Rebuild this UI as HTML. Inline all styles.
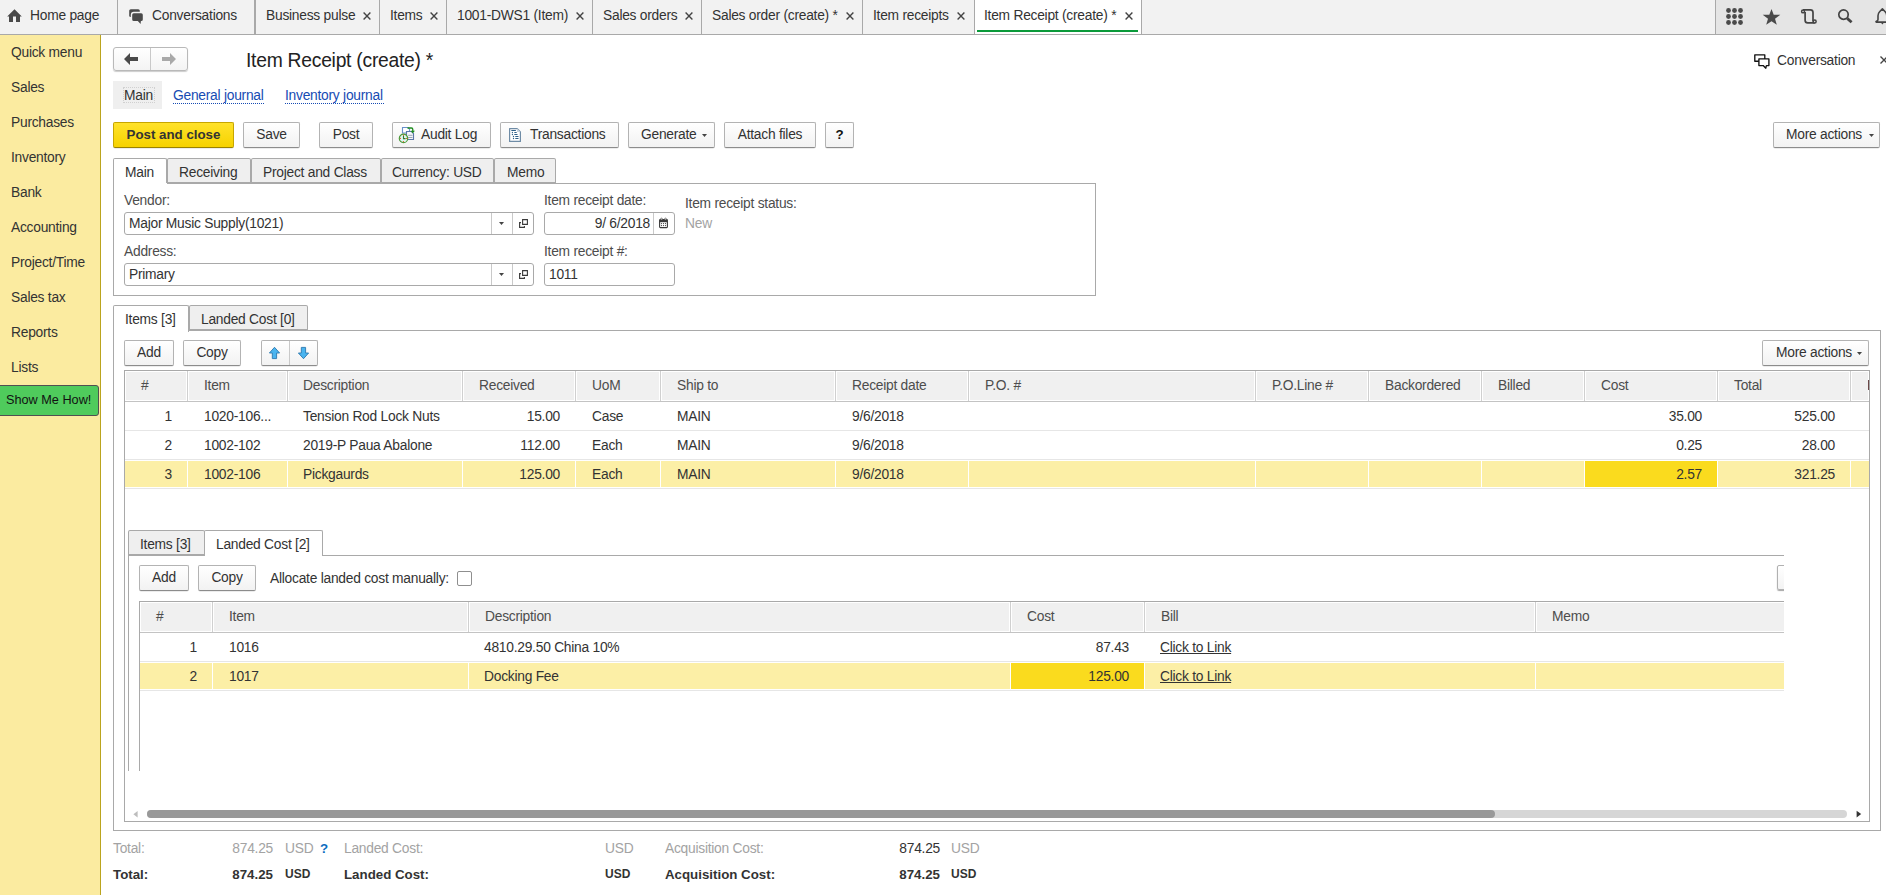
<!DOCTYPE html><html><head><meta charset="utf-8"><style>
*{margin:0;padding:0;box-sizing:border-box}
html,body{width:1886px;height:895px;overflow:hidden;background:#fff;font-family:"Liberation Sans",sans-serif;}
.t{position:absolute;white-space:nowrap;}
.r{position:absolute;}
.btn{position:absolute;border:1px solid #b3b3b3;border-bottom-color:#8c8c8c;border-radius:2px;background:linear-gradient(#fff,#f2f2f2);box-shadow:0 0.5px 0.5px rgba(0,0,0,.15);}
.btn.y{background:linear-gradient(#ffe22a,#f6d200);border-color:#c7a600;border-bottom-color:#9a8200;}
svg{position:absolute;overflow:visible}
</style></head><body>
<div class="r" style="left:0px;top:0px;width:1886px;height:34px;background:#f2f2f2"></div>
<div class="r" style="left:0px;top:34px;width:1886px;height:1px;background:#a9a9a9"></div>
<div class="r" style="left:1716px;top:0px;width:170px;height:34px;background:#e5e5e5"></div>
<div class="r" style="left:117px;top:0px;width:1px;height:34px;background:#a9a9a9"></div>
<div class="r" style="left:254px;top:0px;width:2px;height:34px;background:#a9a9a9"></div>
<div class="r" style="left:379px;top:0px;width:1px;height:34px;background:#a9a9a9"></div>
<div class="r" style="left:446px;top:0px;width:1px;height:34px;background:#a9a9a9"></div>
<div class="r" style="left:592px;top:0px;width:1px;height:34px;background:#a9a9a9"></div>
<div class="r" style="left:701px;top:0px;width:1px;height:34px;background:#a9a9a9"></div>
<div class="r" style="left:862px;top:0px;width:1px;height:34px;background:#a9a9a9"></div>
<div class="r" style="left:974px;top:0px;width:1px;height:34px;background:#a9a9a9"></div>
<div class="r" style="left:1141px;top:0px;width:1px;height:34px;background:#a9a9a9"></div>
<div class="r" style="left:1715px;top:0px;width:1px;height:34px;background:#a9a9a9"></div>
<div class="r" style="left:975px;top:0px;width:166px;height:34px;background:#fff"></div>
<div class="r" style="left:977px;top:30px;width:161px;height:2px;background:#0a9a3a"></div>
<div class="t" style="left:30px;top:8.72px;font-size:13.8px;line-height:13.8px;color:#333;font-weight:normal;letter-spacing:-0.25px;">Home page</div>
<div class="t" style="left:152px;top:8.72px;font-size:13.8px;line-height:13.8px;color:#333;font-weight:normal;letter-spacing:-0.25px;">Conversations</div>
<div class="t" style="left:266px;top:8.72px;font-size:13.8px;line-height:13.8px;color:#333;font-weight:normal;letter-spacing:-0.25px;">Business pulse</div>
<svg style="left:363px;top:11.6px" width="8" height="8"><path d="M0.6 0.6L7.4 7.4M7.4 0.6L0.6 7.4" stroke="#444" stroke-width="1.4"/></svg>
<div class="t" style="left:390px;top:8.72px;font-size:13.8px;line-height:13.8px;color:#333;font-weight:normal;letter-spacing:-0.25px;">Items</div>
<svg style="left:430px;top:11.6px" width="8" height="8"><path d="M0.6 0.6L7.4 7.4M7.4 0.6L0.6 7.4" stroke="#444" stroke-width="1.4"/></svg>
<div class="t" style="left:457px;top:8.72px;font-size:13.8px;line-height:13.8px;color:#333;font-weight:normal;letter-spacing:-0.25px;">1001-DWS1 (Item)</div>
<svg style="left:576px;top:11.6px" width="8" height="8"><path d="M0.6 0.6L7.4 7.4M7.4 0.6L0.6 7.4" stroke="#444" stroke-width="1.4"/></svg>
<div class="t" style="left:603px;top:8.72px;font-size:13.8px;line-height:13.8px;color:#333;font-weight:normal;letter-spacing:-0.25px;">Sales orders</div>
<svg style="left:685px;top:11.6px" width="8" height="8"><path d="M0.6 0.6L7.4 7.4M7.4 0.6L0.6 7.4" stroke="#444" stroke-width="1.4"/></svg>
<div class="t" style="left:712px;top:8.72px;font-size:13.8px;line-height:13.8px;color:#333;font-weight:normal;letter-spacing:-0.25px;">Sales order (create) *</div>
<svg style="left:846px;top:11.6px" width="8" height="8"><path d="M0.6 0.6L7.4 7.4M7.4 0.6L0.6 7.4" stroke="#444" stroke-width="1.4"/></svg>
<div class="t" style="left:873px;top:8.72px;font-size:13.8px;line-height:13.8px;color:#333;font-weight:normal;letter-spacing:-0.25px;">Item receipts</div>
<svg style="left:957px;top:11.6px" width="8" height="8"><path d="M0.6 0.6L7.4 7.4M7.4 0.6L0.6 7.4" stroke="#444" stroke-width="1.4"/></svg>
<div class="t" style="left:984px;top:8.72px;font-size:13.8px;line-height:13.8px;color:#333;font-weight:normal;letter-spacing:-0.25px;">Item Receipt (create) *</div>
<svg style="left:1125px;top:11.6px" width="8" height="8"><path d="M0.6 0.6L7.4 7.4M7.4 0.6L0.6 7.4" stroke="#444" stroke-width="1.4"/></svg>
<svg style="left:7px;top:9px" width="15" height="14"><path d="M7.5 0.2L0.2 7.6H2V13H6V7.6H9V13H13V7.6H14.8Z" fill="#4a4a4a"/></svg>
<svg style="left:124px;top:4px" width="26" height="26"><rect x="5.2" y="5.2" width="10.6" height="7.8" rx="1.6" fill="#4a4a4a"/><path d="M9.8 9.2H17.2Q18.8 9.2 18.8 10.8V15.4Q18.8 17 17.2 17H16.9L16.6 20L13.8 17H9.8Q8.2 17 8.2 15.4V10.8Q8.2 9.2 9.8 9.2Z" fill="#4a4a4a" stroke="#f2f2f2" stroke-width="2.8" paint-order="stroke" stroke-linejoin="round"/></svg>
<svg style="left:1726px;top:8px" width="17" height="17"><circle cx="2.5" cy="2.5" r="2.4" fill="#4a4a4a"/><circle cx="2.5" cy="8.5" r="2.4" fill="#4a4a4a"/><circle cx="2.5" cy="14.5" r="2.4" fill="#4a4a4a"/><circle cx="8.5" cy="2.5" r="2.4" fill="#4a4a4a"/><circle cx="8.5" cy="8.5" r="2.4" fill="#4a4a4a"/><circle cx="8.5" cy="14.5" r="2.4" fill="#4a4a4a"/><circle cx="14.5" cy="2.5" r="2.4" fill="#4a4a4a"/><circle cx="14.5" cy="8.5" r="2.4" fill="#4a4a4a"/><circle cx="14.5" cy="14.5" r="2.4" fill="#4a4a4a"/></svg>
<svg style="left:1763px;top:9px" width="17" height="16"><path d="M8.5 0L10.7 5.7L17.3 5.8L12 9.7L13.8 15.8L8.5 12.2L3.2 15.8L5 9.7L-0.3 5.8L6.3 5.7Z" fill="#4a4a4a"/></svg>
<svg style="left:1795px;top:4px" width="26" height="26"><path d="M8 5.9H15.4Q18 5.9 18 8.5V17.5" fill="none" stroke="#444" stroke-width="1.7"/><path d="M10.1 8V16.3Q10.1 18.95 12.7 18.95H19.7" fill="none" stroke="#444" stroke-width="1.7"/><circle cx="8.05" cy="7.4" r="1.45" fill="#e5e5e5" stroke="#444" stroke-width="1.5"/><circle cx="19.7" cy="17.5" r="1.45" fill="#e5e5e5" stroke="#444" stroke-width="1.5"/></svg>
<svg style="left:1838px;top:9px" width="16" height="16"><circle cx="5.5" cy="5.6" r="4.7" fill="none" stroke="#444" stroke-width="1.7"/><path d="M9.2 9.4L13.6 13.2" stroke="#444" stroke-width="2.8"/></svg>
<svg style="left:1870px;top:4px" width="26" height="26"><path d="M12.4 4.9L9.6 7.8Q8 9.4 8 11.8V15.4Q8 16.6 6.6 17.2Q5.4 17.9 6.4 18.1H18.4Q19.4 17.9 18.2 17.2Q16.8 16.6 16.8 15.4V11.8Q16.8 9.4 15.2 7.8Z" fill="none" stroke="#444" stroke-width="1.6" stroke-linejoin="round"/><path d="M10.8 18.6H14L12.4 20.6Z" fill="#444"/></svg>
<div class="r" style="left:0px;top:35px;width:100px;height:860px;background:#fbeba0"></div>
<div class="r" style="left:100px;top:35px;width:1px;height:860px;background:#bba41e"></div>
<div class="t" style="left:11px;top:45.72px;font-size:13.8px;line-height:13.8px;color:#333;font-weight:normal;letter-spacing:-0.25px;">Quick menu</div>
<div class="t" style="left:11px;top:80.72px;font-size:13.8px;line-height:13.8px;color:#333;font-weight:normal;letter-spacing:-0.25px;">Sales</div>
<div class="t" style="left:11px;top:115.72px;font-size:13.8px;line-height:13.8px;color:#333;font-weight:normal;letter-spacing:-0.25px;">Purchases</div>
<div class="t" style="left:11px;top:150.72px;font-size:13.8px;line-height:13.8px;color:#333;font-weight:normal;letter-spacing:-0.25px;">Inventory</div>
<div class="t" style="left:11px;top:185.72px;font-size:13.8px;line-height:13.8px;color:#333;font-weight:normal;letter-spacing:-0.25px;">Bank</div>
<div class="t" style="left:11px;top:220.72px;font-size:13.8px;line-height:13.8px;color:#333;font-weight:normal;letter-spacing:-0.25px;">Accounting</div>
<div class="t" style="left:11px;top:255.72px;font-size:13.8px;line-height:13.8px;color:#333;font-weight:normal;letter-spacing:-0.25px;">Project/Time</div>
<div class="t" style="left:11px;top:290.72px;font-size:13.8px;line-height:13.8px;color:#333;font-weight:normal;letter-spacing:-0.25px;">Sales tax</div>
<div class="t" style="left:11px;top:325.72px;font-size:13.8px;line-height:13.8px;color:#333;font-weight:normal;letter-spacing:-0.25px;">Reports</div>
<div class="t" style="left:11px;top:360.72px;font-size:13.8px;line-height:13.8px;color:#333;font-weight:normal;letter-spacing:-0.25px;">Lists</div>
<div class="r" style="left:-3px;top:385px;width:102px;height:31px;background:#4fcb5c;border:1px solid #505050;border-radius:3px"></div>
<div class="t" style="left:6px;top:394.25px;font-size:12.7px;line-height:12.7px;color:#111;font-weight:normal;">Show Me How!</div>
<div class="r" style="left:113px;top:47px;width:75px;height:24px;border:1px solid #b9b9b9;border-radius:3px;background:linear-gradient(#fff,#f4f4f4);box-shadow:0 1px 1px rgba(0,0,0,.2)"></div>
<div class="r" style="left:150px;top:48px;width:1px;height:22px;background:#c9c9c9"></div>
<svg style="left:124px;top:53px" width="15" height="12"><path d="M0 6L6 0V4H14V8H6V12Z" fill="#4a4a4a"/></svg>
<svg style="left:161px;top:53px" width="15" height="12"><path d="M15 6L9 0V4H1V8H9V12Z" fill="#a9a9a9"/></svg>
<div class="t" style="left:246px;top:50.66px;font-size:19.3px;line-height:19.3px;color:#222;font-weight:normal;letter-spacing:-0.25px;">Item Receipt (create) *</div>
<svg style="left:1750px;top:50px" width="22" height="22"><path d="M4.8 4.8H14.8V11.2H4.8Z" fill="#fff" stroke="#111" stroke-width="1.35" stroke-linejoin="round"/><path d="M8.9 8.9H18.9V15.6H16.4L15.8 18.2L13.2 15.6H8.9Z" fill="#fff" stroke="#111" stroke-width="1.35" stroke-linejoin="round"/></svg>
<div class="t" style="left:1777px;top:53.72px;font-size:13.8px;line-height:13.8px;color:#333;font-weight:normal;letter-spacing:-0.25px;">Conversation</div>
<svg style="left:1880px;top:56px" width="8" height="8"><path d="M0.5 0.5L7.5 7.5M7.5 0.5L0.5 7.5" stroke="#444" stroke-width="1.4"/></svg>
<div class="r" style="left:113px;top:81px;width:49px;height:28px;background:#efefef"></div>
<div class="r" style="left:123px;top:87px;width:32px;height:16px;border:1px dotted #d0d0d0"></div>
<div class="t" style="left:124px;top:88.72px;font-size:13.8px;line-height:13.8px;color:#333;font-weight:normal;letter-spacing:-0.25px;">Main</div>
<div class="t" style="left:173px;top:88.72px;font-size:13.8px;line-height:13.8px;color:#164bb3;font-weight:normal;letter-spacing:-0.25px;">General journal</div>
<div class="r" style="left:173px;top:103px;width:91px;height:1px;border-top:1px dotted #164bb3"></div>
<div class="t" style="left:285px;top:88.72px;font-size:13.8px;line-height:13.8px;color:#164bb3;font-weight:normal;letter-spacing:-0.25px;">Inventory journal</div>
<div class="r" style="left:285px;top:103px;width:99px;height:1px;border-top:1px dotted #164bb3"></div>
<div class="btn y" style="left:113px;top:122px;width:121px;height:26px;"></div>
<div class="t" style="left:-126.5px;width:600px;text-align:center;top:127.74px;font-size:13.3px;line-height:13.3px;color:#333;font-weight:bold;">Post and close</div>
<div class="btn" style="left:243px;top:122px;width:57px;height:26px;"></div>
<div class="t" style="left:-28.5px;width:600px;text-align:center;top:127.72px;font-size:13.8px;line-height:13.8px;color:#333;font-weight:normal;letter-spacing:-0.25px;">Save</div>
<div class="btn" style="left:319px;top:122px;width:54px;height:26px;"></div>
<div class="t" style="left:46.0px;width:600px;text-align:center;top:127.72px;font-size:13.8px;line-height:13.8px;color:#333;font-weight:normal;letter-spacing:-0.25px;">Post</div>
<div class="btn" style="left:392px;top:122px;width:99px;height:26px;"></div>
<div class="t" style="left:421px;top:127.72px;font-size:13.8px;line-height:13.8px;color:#333;font-weight:normal;letter-spacing:-0.25px;">Audit Log</div>
<svg style="left:398px;top:124px" width="20" height="20"><path d="M4.5 3.5H10L11.5 5V9H4.5Z" fill="#fff" stroke="#6a90cc" stroke-width="1.1"/><path d="M8.5 7.5H13.5L15.5 9.5V15.5H8.5Z" fill="#f4f7fb" stroke="#5b76a8" stroke-width="1.1"/><path d="M10.2 11.3H14.5M10.2 13.5H14.5" stroke="#8f9aab" stroke-width="0.9"/><path d="M9.5 4H13.5Q14.8 4 14.8 5.4V7.2" fill="none" stroke="#1e8c1e" stroke-width="1.3"/><path d="M12.6 6.8H17L14.8 9.2Z" fill="#1e8c1e"/><circle cx="5.5" cy="14.4" r="4.2" fill="#dff6f2" stroke="#4a9a3a" stroke-width="1.2"/><path d="M5.5 11.6V14.6H7.6" fill="none" stroke="#2f7a2f" stroke-width="1.1"/><g fill="#e8561b"><circle cx="5.5" cy="11.2" r="0.6"/><circle cx="5.5" cy="17.6" r="0.6"/><circle cx="2.4" cy="14.4" r="0.6"/><circle cx="8.6" cy="14.4" r="0.6"/></g></svg>
<div class="btn" style="left:500px;top:122px;width:119px;height:26px;"></div>
<div class="t" style="left:530px;top:127.72px;font-size:13.8px;line-height:13.8px;color:#333;font-weight:normal;letter-spacing:-0.25px;">Transactions</div>
<svg style="left:507px;top:126px" width="16" height="18"><path d="M2.6 2.6H10.2L13.4 5.8V15.4H2.6Z" fill="#fff" stroke="#6f8ca6" stroke-width="1.2" stroke-linejoin="round"/><path d="M10 2.6V6H13.4" fill="#c9d5df"/><g fill="#2f6088"><rect x="4.2" y="3.9" width="4.8" height="1" rx="0.5"/><circle cx="5.4" cy="6.5" r="0.65"/><rect x="7.2" y="6" width="2.6" height="1" rx="0.5"/><circle cx="5.4" cy="8.5" r="0.65"/><rect x="7.2" y="8" width="3.4" height="1" rx="0.5"/><circle cx="6.5" cy="10.5" r="0.65"/><rect x="8.2" y="10" width="3.4" height="1" rx="0.5"/><circle cx="6.5" cy="12.5" r="0.65"/><rect x="8.2" y="12" width="3.4" height="1" rx="0.5"/></g></svg>
<div class="btn" style="left:628px;top:122px;width:87px;height:26px;"></div>
<div class="t" style="left:641px;top:127.72px;font-size:13.8px;line-height:13.8px;color:#333;font-weight:normal;letter-spacing:-0.25px;">Generate</div>
<svg style="left:702px;top:134px" width="5" height="3"><path d="M0 0H5L2.5 3Z" fill="#444"/></svg>
<div class="btn" style="left:724px;top:122px;width:92px;height:26px;"></div>
<div class="t" style="left:470.0px;width:600px;text-align:center;top:127.72px;font-size:13.8px;line-height:13.8px;color:#333;font-weight:normal;letter-spacing:-0.25px;">Attach files</div>
<div class="btn" style="left:825px;top:122px;width:29px;height:26px;"></div>
<div class="t" style="left:539.5px;width:600px;text-align:center;top:127.74px;font-size:13.3px;line-height:13.3px;color:#111;font-weight:bold;">?</div>
<div class="btn" style="left:1773px;top:122px;width:107px;height:26px;"></div>
<div class="t" style="left:1786px;top:127.72px;font-size:13.8px;line-height:13.8px;color:#333;font-weight:normal;letter-spacing:-0.25px;">More actions</div>
<svg style="left:1869px;top:134px" width="5" height="3"><path d="M0 0H5L2.5 3Z" fill="#444"/></svg>
<div class="r" style="left:113px;top:183px;width:983px;height:1px;background:#a9a9a9"></div>
<div class="r" style="left:113px;top:158px;width:54px;height:26px;background:#fff;border:1px solid #a9a9a9;border-bottom:none;border-radius:2px 2px 0 0"></div>
<div class="t" style="left:125px;top:165.72px;font-size:13.8px;line-height:13.8px;color:#333;font-weight:normal;letter-spacing:-0.25px;">Main</div>
<div class="r" style="left:167px;top:158px;width:84px;height:26px;background:#efefef;border:1px solid #a9a9a9;border-left:1px solid #a9a9a9;border-bottom:2px solid #a9a9a9;border-radius:2px 2px 0 0"></div>
<div class="t" style="left:179px;top:165.72px;font-size:13.8px;line-height:13.8px;color:#333;font-weight:normal;letter-spacing:-0.25px;">Receiving</div>
<div class="r" style="left:251px;top:158px;width:130px;height:26px;background:#efefef;border:1px solid #a9a9a9;border-left:1px solid #a9a9a9;border-bottom:2px solid #a9a9a9;border-radius:2px 2px 0 0"></div>
<div class="t" style="left:263px;top:165.72px;font-size:13.8px;line-height:13.8px;color:#333;font-weight:normal;letter-spacing:-0.25px;">Project and Class</div>
<div class="r" style="left:381px;top:158px;width:113px;height:26px;background:#efefef;border:1px solid #a9a9a9;border-left:1px solid #a9a9a9;border-bottom:2px solid #a9a9a9;border-radius:2px 2px 0 0"></div>
<div class="t" style="left:392px;top:165.72px;font-size:13.8px;line-height:13.8px;color:#333;font-weight:normal;letter-spacing:-0.25px;">Currency: USD</div>
<div class="r" style="left:494px;top:158px;width:62px;height:26px;background:#efefef;border:1px solid #a9a9a9;border-left:1px solid #a9a9a9;border-bottom:2px solid #a9a9a9;border-radius:2px 2px 0 0"></div>
<div class="t" style="left:507px;top:165.72px;font-size:13.8px;line-height:13.8px;color:#333;font-weight:normal;letter-spacing:-0.25px;">Memo</div>
<div class="r" style="left:113px;top:183px;width:983px;height:113px;border:1px solid #a9a9a9;border-top:none"></div>
<div class="r" style="left:114px;top:183px;width:53px;height:1px;background:#fff"></div>
<div class="t" style="left:124px;top:193.72px;font-size:13.8px;line-height:13.8px;color:#4d4d4d;font-weight:normal;letter-spacing:-0.25px;">Vendor:</div>
<div class="r" style="left:124px;top:212px;width:410px;height:23px;border:1px solid #a9a9a9;border-radius:3px;background:#fff"></div>
<div class="r" style="left:491px;top:213px;width:1px;height:21px;background:#c9c9c9"></div>
<div class="r" style="left:512px;top:213px;width:1px;height:21px;background:#c9c9c9"></div>
<div class="t" style="left:129px;top:216.72px;font-size:13.8px;line-height:13.8px;color:#333;font-weight:normal;letter-spacing:-0.25px;">Major Music Supply(1021)</div>
<div class="t" style="left:124px;top:244.72px;font-size:13.8px;line-height:13.8px;color:#4d4d4d;font-weight:normal;letter-spacing:-0.25px;">Address:</div>
<div class="r" style="left:124px;top:263px;width:410px;height:23px;border:1px solid #a9a9a9;border-radius:3px;background:#fff"></div>
<div class="r" style="left:491px;top:264px;width:1px;height:21px;background:#c9c9c9"></div>
<div class="r" style="left:512px;top:264px;width:1px;height:21px;background:#c9c9c9"></div>
<div class="t" style="left:129px;top:267.72px;font-size:13.8px;line-height:13.8px;color:#333;font-weight:normal;letter-spacing:-0.25px;">Primary</div>
<svg style="left:499px;top:222px" width="5" height="3"><path d="M0 0H5L2.5 3Z" fill="#444"/></svg>
<svg style="left:518px;top:218px" width="11" height="11"><path d="M4.6 1.6H9.4V6.4H4.6Z" fill="none" stroke="#3a3a3a" stroke-width="1.1"/><path d="M3 4.6H1.6V9.4H6.4V8" fill="none" stroke="#3a3a3a" stroke-width="1.1"/></svg>
<svg style="left:499px;top:273px" width="5" height="3"><path d="M0 0H5L2.5 3Z" fill="#444"/></svg>
<svg style="left:518px;top:269px" width="11" height="11"><path d="M4.6 1.6H9.4V6.4H4.6Z" fill="none" stroke="#3a3a3a" stroke-width="1.1"/><path d="M3 4.6H1.6V9.4H6.4V8" fill="none" stroke="#3a3a3a" stroke-width="1.1"/></svg>
<div class="t" style="left:544px;top:193.72px;font-size:13.8px;line-height:13.8px;color:#4d4d4d;font-weight:normal;letter-spacing:-0.25px;">Item receipt date:</div>
<div class="r" style="left:544px;top:212px;width:131px;height:23px;border:1px solid #a9a9a9;border-radius:3px;background:#fff"></div>
<div class="r" style="left:653px;top:213px;width:1px;height:21px;background:#c9c9c9"></div>
<div class="t" style="left:50px;width:600px;text-align:right;top:216.72px;font-size:13.8px;line-height:13.8px;color:#333;font-weight:normal;letter-spacing:-0.25px;">9/ 6/2018</div>
<svg style="left:658px;top:217px" width="11" height="12"><rect x="1.6" y="2.6" width="7.8" height="8" rx="0.8" fill="#fff" stroke="#3a3a3a" stroke-width="1.1"/><rect x="1.6" y="2.6" width="7.8" height="2.6" fill="#3a3a3a"/><circle cx="3.5" cy="2" r="0.9" fill="#fff" stroke="#3a3a3a" stroke-width="0.6"/><circle cx="7.5" cy="2" r="0.9" fill="#fff" stroke="#3a3a3a" stroke-width="0.6"/><g fill="#3a3a3a"><circle cx="3.5" cy="6.6" r="0.6"/><circle cx="5.5" cy="6.6" r="0.6"/><circle cx="7.5" cy="6.6" r="0.6"/><circle cx="3.5" cy="8.6" r="0.6"/><circle cx="5.5" cy="8.6" r="0.6"/><circle cx="7.5" cy="8.6" r="0.6"/></g></svg>
<div class="t" style="left:544px;top:244.72px;font-size:13.8px;line-height:13.8px;color:#4d4d4d;font-weight:normal;letter-spacing:-0.25px;">Item receipt #:</div>
<div class="r" style="left:544px;top:263px;width:131px;height:23px;border:1px solid #a9a9a9;border-radius:3px;background:#fff"></div>
<div class="t" style="left:549px;top:267.72px;font-size:13.8px;line-height:13.8px;color:#333;font-weight:normal;letter-spacing:-0.25px;">1011</div>
<div class="t" style="left:685px;top:196.72px;font-size:13.8px;line-height:13.8px;color:#4d4d4d;font-weight:normal;letter-spacing:-0.25px;">Item receipt status:</div>
<div class="t" style="left:685px;top:216.72px;font-size:13.8px;line-height:13.8px;color:#a3a3a3;font-weight:normal;letter-spacing:-0.25px;">New</div>
<div class="r" style="left:113px;top:330px;width:1768px;height:501px;border:1px solid #a9a9a9;border-top:1px solid #a9a9a9"></div>
<div class="r" style="left:113px;top:305px;width:76px;height:27px;background:#fff;border:1px solid #a9a9a9;border-bottom:none;border-radius:2px 2px 0 0"></div>
<div class="r" style="left:189px;top:305px;width:119px;height:26px;background:#efefef;border:1px solid #a9a9a9;border-bottom:2px solid #a9a9a9;border-radius:2px 2px 0 0"></div>
<div class="t" style="left:125px;top:312.72px;font-size:13.8px;line-height:13.8px;color:#333;font-weight:normal;letter-spacing:-0.25px;">Items [3]</div>
<div class="t" style="left:201px;top:312.72px;font-size:13.8px;line-height:13.8px;color:#333;font-weight:normal;letter-spacing:-0.25px;">Landed Cost [0]</div>
<div class="btn" style="left:124px;top:340px;width:50px;height:26px;"></div>
<div class="t" style="left:-151.0px;width:600px;text-align:center;top:345.72px;font-size:13.8px;line-height:13.8px;color:#333;font-weight:normal;letter-spacing:-0.25px;">Add</div>
<div class="btn" style="left:183px;top:340px;width:58px;height:26px;"></div>
<div class="t" style="left:-88.0px;width:600px;text-align:center;top:345.72px;font-size:13.8px;line-height:13.8px;color:#333;font-weight:normal;letter-spacing:-0.25px;">Copy</div>
<div class="btn" style="left:261px;top:340px;width:57px;height:26px;"></div>
<div class="r" style="left:289px;top:341px;width:1px;height:24px;background:#c9c9c9"></div>
<svg style="left:268px;top:346px" width="14" height="14"><path d="M6.5 1.3L11.6 7H8.6V12.6H4.3V7H1.4Z" fill="#4ab4ef" stroke="#2a78b0" stroke-width="0.9" stroke-linejoin="miter"/></svg>
<svg style="left:297px;top:346px" width="14" height="14"><path d="M6.5 12.7L11.6 7H8.6V1.4H4.3V7H1.4Z" fill="#4ab4ef" stroke="#2a78b0" stroke-width="0.9" stroke-linejoin="miter"/></svg>
<div class="btn" style="left:1762px;top:340px;width:107px;height:26px;"></div>
<div class="t" style="left:1776px;top:345.72px;font-size:13.8px;line-height:13.8px;color:#333;font-weight:normal;letter-spacing:-0.25px;">More actions</div>
<svg style="left:1857px;top:352px" width="5" height="3"><path d="M0 0H5L2.5 3Z" fill="#444"/></svg>
<div class="r" style="left:124px;top:370px;width:1746px;height:452px;border:1px solid #a9a9a9;background:#fff"></div>
<div class="r" style="left:126px;top:372px;width:60px;height:28px;background:#f0f0f0"></div>
<div class="r" style="left:189px;top:372px;width:97px;height:28px;background:#f0f0f0"></div>
<div class="r" style="left:289px;top:372px;width:172px;height:28px;background:#f0f0f0"></div>
<div class="r" style="left:464px;top:372px;width:110px;height:28px;background:#f0f0f0"></div>
<div class="r" style="left:577px;top:372px;width:82px;height:28px;background:#f0f0f0"></div>
<div class="r" style="left:662px;top:372px;width:172px;height:28px;background:#f0f0f0"></div>
<div class="r" style="left:837px;top:372px;width:130px;height:28px;background:#f0f0f0"></div>
<div class="r" style="left:970px;top:372px;width:284px;height:28px;background:#f0f0f0"></div>
<div class="r" style="left:1257px;top:372px;width:110px;height:28px;background:#f0f0f0"></div>
<div class="r" style="left:1370px;top:372px;width:110px;height:28px;background:#f0f0f0"></div>
<div class="r" style="left:1483px;top:372px;width:100px;height:28px;background:#f0f0f0"></div>
<div class="r" style="left:1586px;top:372px;width:130px;height:28px;background:#f0f0f0"></div>
<div class="r" style="left:1719px;top:372px;width:130px;height:28px;background:#f0f0f0"></div>
<div class="r" style="left:1852px;top:372px;width:16px;height:28px;background:#f0f0f0"></div>
<div class="r" style="left:187px;top:371px;width:1px;height:31px;background:#d0d0d0"></div>
<div class="r" style="left:287px;top:371px;width:1px;height:31px;background:#d0d0d0"></div>
<div class="r" style="left:462px;top:371px;width:1px;height:31px;background:#d0d0d0"></div>
<div class="r" style="left:575px;top:371px;width:1px;height:31px;background:#d0d0d0"></div>
<div class="r" style="left:660px;top:371px;width:1px;height:31px;background:#d0d0d0"></div>
<div class="r" style="left:835px;top:371px;width:1px;height:31px;background:#d0d0d0"></div>
<div class="r" style="left:968px;top:371px;width:1px;height:31px;background:#d0d0d0"></div>
<div class="r" style="left:1255px;top:371px;width:1px;height:31px;background:#d0d0d0"></div>
<div class="r" style="left:1368px;top:371px;width:1px;height:31px;background:#d0d0d0"></div>
<div class="r" style="left:1481px;top:371px;width:1px;height:31px;background:#d0d0d0"></div>
<div class="r" style="left:1584px;top:371px;width:1px;height:31px;background:#d0d0d0"></div>
<div class="r" style="left:1717px;top:371px;width:1px;height:31px;background:#d0d0d0"></div>
<div class="r" style="left:1850px;top:371px;width:1px;height:31px;background:#d0d0d0"></div>
<div class="r" style="left:125px;top:401px;width:1744px;height:1px;background:#c3c3c3"></div>
<div class="t" style="left:141px;top:378.72px;font-size:13.8px;line-height:13.8px;color:#4d4d4d;font-weight:normal;letter-spacing:-0.25px;">#</div>
<div class="t" style="left:204px;top:378.72px;font-size:13.8px;line-height:13.8px;color:#4d4d4d;font-weight:normal;letter-spacing:-0.25px;">Item</div>
<div class="t" style="left:303px;top:378.72px;font-size:13.8px;line-height:13.8px;color:#4d4d4d;font-weight:normal;letter-spacing:-0.25px;">Description</div>
<div class="t" style="left:479px;top:378.72px;font-size:13.8px;line-height:13.8px;color:#4d4d4d;font-weight:normal;letter-spacing:-0.25px;">Received</div>
<div class="t" style="left:592px;top:378.72px;font-size:13.8px;line-height:13.8px;color:#4d4d4d;font-weight:normal;letter-spacing:-0.25px;">UoM</div>
<div class="t" style="left:677px;top:378.72px;font-size:13.8px;line-height:13.8px;color:#4d4d4d;font-weight:normal;letter-spacing:-0.25px;">Ship to</div>
<div class="t" style="left:852px;top:378.72px;font-size:13.8px;line-height:13.8px;color:#4d4d4d;font-weight:normal;letter-spacing:-0.25px;">Receipt date</div>
<div class="t" style="left:985px;top:378.72px;font-size:13.8px;line-height:13.8px;color:#4d4d4d;font-weight:normal;letter-spacing:-0.25px;">P.O. #</div>
<div class="t" style="left:1272px;top:378.72px;font-size:13.8px;line-height:13.8px;color:#4d4d4d;font-weight:normal;letter-spacing:-0.25px;">P.O.Line #</div>
<div class="t" style="left:1385px;top:378.72px;font-size:13.8px;line-height:13.8px;color:#4d4d4d;font-weight:normal;letter-spacing:-0.25px;">Backordered</div>
<div class="t" style="left:1498px;top:378.72px;font-size:13.8px;line-height:13.8px;color:#4d4d4d;font-weight:normal;letter-spacing:-0.25px;">Billed</div>
<div class="t" style="left:1601px;top:378.72px;font-size:13.8px;line-height:13.8px;color:#4d4d4d;font-weight:normal;letter-spacing:-0.25px;">Cost</div>
<div class="t" style="left:1734px;top:378.72px;font-size:13.8px;line-height:13.8px;color:#4d4d4d;font-weight:normal;letter-spacing:-0.25px;">Total</div>
<div class="r" style="left:125px;top:430px;width:1744px;height:1px;background:#e6e6e6"></div>
<div class="t" style="left:-428px;width:600px;text-align:right;top:409.72px;font-size:13.8px;line-height:13.8px;color:#333;font-weight:normal;letter-spacing:-0.25px;">1</div>
<div class="t" style="left:204px;top:409.72px;font-size:13.8px;line-height:13.8px;color:#333;font-weight:normal;letter-spacing:-0.25px;">1020-106...</div>
<div class="t" style="left:303px;top:409.72px;font-size:13.8px;line-height:13.8px;color:#333;font-weight:normal;letter-spacing:-0.25px;">Tension Rod Lock Nuts</div>
<div class="t" style="left:-40px;width:600px;text-align:right;top:409.72px;font-size:13.8px;line-height:13.8px;color:#333;font-weight:normal;letter-spacing:-0.25px;">15.00</div>
<div class="t" style="left:592px;top:409.72px;font-size:13.8px;line-height:13.8px;color:#333;font-weight:normal;letter-spacing:-0.25px;">Case</div>
<div class="t" style="left:677px;top:409.72px;font-size:13.8px;line-height:13.8px;color:#333;font-weight:normal;letter-spacing:-0.25px;">MAIN</div>
<div class="t" style="left:852px;top:409.72px;font-size:13.8px;line-height:13.8px;color:#333;font-weight:normal;letter-spacing:-0.25px;">9/6/2018</div>
<div class="t" style="left:1102px;width:600px;text-align:right;top:409.72px;font-size:13.8px;line-height:13.8px;color:#333;font-weight:normal;letter-spacing:-0.25px;">35.00</div>
<div class="t" style="left:1235px;width:600px;text-align:right;top:409.72px;font-size:13.8px;line-height:13.8px;color:#333;font-weight:normal;letter-spacing:-0.25px;">525.00</div>
<div class="r" style="left:125px;top:459px;width:1744px;height:1px;background:#e6e6e6"></div>
<div class="t" style="left:-428px;width:600px;text-align:right;top:438.72px;font-size:13.8px;line-height:13.8px;color:#333;font-weight:normal;letter-spacing:-0.25px;">2</div>
<div class="t" style="left:204px;top:438.72px;font-size:13.8px;line-height:13.8px;color:#333;font-weight:normal;letter-spacing:-0.25px;">1002-102</div>
<div class="t" style="left:303px;top:438.72px;font-size:13.8px;line-height:13.8px;color:#333;font-weight:normal;letter-spacing:-0.25px;">2019-P Paua Abalone</div>
<div class="t" style="left:-40px;width:600px;text-align:right;top:438.72px;font-size:13.8px;line-height:13.8px;color:#333;font-weight:normal;letter-spacing:-0.25px;">112.00</div>
<div class="t" style="left:592px;top:438.72px;font-size:13.8px;line-height:13.8px;color:#333;font-weight:normal;letter-spacing:-0.25px;">Each</div>
<div class="t" style="left:677px;top:438.72px;font-size:13.8px;line-height:13.8px;color:#333;font-weight:normal;letter-spacing:-0.25px;">MAIN</div>
<div class="t" style="left:852px;top:438.72px;font-size:13.8px;line-height:13.8px;color:#333;font-weight:normal;letter-spacing:-0.25px;">9/6/2018</div>
<div class="t" style="left:1102px;width:600px;text-align:right;top:438.72px;font-size:13.8px;line-height:13.8px;color:#333;font-weight:normal;letter-spacing:-0.25px;">0.25</div>
<div class="t" style="left:1235px;width:600px;text-align:right;top:438.72px;font-size:13.8px;line-height:13.8px;color:#333;font-weight:normal;letter-spacing:-0.25px;">28.00</div>
<div class="r" style="left:125px;top:461px;width:62px;height:26px;background:#fcefa6"></div>
<div class="r" style="left:188px;top:461px;width:99px;height:26px;background:#fcefa6"></div>
<div class="r" style="left:288px;top:461px;width:174px;height:26px;background:#fcefa6"></div>
<div class="r" style="left:463px;top:461px;width:112px;height:26px;background:#fcefa6"></div>
<div class="r" style="left:576px;top:461px;width:84px;height:26px;background:#fcefa6"></div>
<div class="r" style="left:661px;top:461px;width:174px;height:26px;background:#fcefa6"></div>
<div class="r" style="left:836px;top:461px;width:132px;height:26px;background:#fcefa6"></div>
<div class="r" style="left:969px;top:461px;width:286px;height:26px;background:#fcefa6"></div>
<div class="r" style="left:1256px;top:461px;width:112px;height:26px;background:#fcefa6"></div>
<div class="r" style="left:1369px;top:461px;width:112px;height:26px;background:#fcefa6"></div>
<div class="r" style="left:1482px;top:461px;width:102px;height:26px;background:#fcefa6"></div>
<div class="r" style="left:1585px;top:461px;width:132px;height:26px;background:#fadb1e"></div>
<div class="r" style="left:1718px;top:461px;width:132px;height:26px;background:#fcefa6"></div>
<div class="r" style="left:1851px;top:461px;width:18px;height:26px;background:#fcefa6"></div>
<div class="r" style="left:125px;top:488px;width:1744px;height:1px;background:#e6e6e6"></div>
<div class="t" style="left:-428px;width:600px;text-align:right;top:467.72px;font-size:13.8px;line-height:13.8px;color:#333;font-weight:normal;letter-spacing:-0.25px;">3</div>
<div class="t" style="left:204px;top:467.72px;font-size:13.8px;line-height:13.8px;color:#333;font-weight:normal;letter-spacing:-0.25px;">1002-106</div>
<div class="t" style="left:303px;top:467.72px;font-size:13.8px;line-height:13.8px;color:#333;font-weight:normal;letter-spacing:-0.25px;">Pickgaurds</div>
<div class="t" style="left:-40px;width:600px;text-align:right;top:467.72px;font-size:13.8px;line-height:13.8px;color:#333;font-weight:normal;letter-spacing:-0.25px;">125.00</div>
<div class="t" style="left:592px;top:467.72px;font-size:13.8px;line-height:13.8px;color:#333;font-weight:normal;letter-spacing:-0.25px;">Each</div>
<div class="t" style="left:677px;top:467.72px;font-size:13.8px;line-height:13.8px;color:#333;font-weight:normal;letter-spacing:-0.25px;">MAIN</div>
<div class="t" style="left:852px;top:467.72px;font-size:13.8px;line-height:13.8px;color:#333;font-weight:normal;letter-spacing:-0.25px;">9/6/2018</div>
<div class="t" style="left:1102px;width:600px;text-align:right;top:467.72px;font-size:13.8px;line-height:13.8px;color:#333;font-weight:normal;letter-spacing:-0.25px;">2.57</div>
<div class="t" style="left:1235px;width:600px;text-align:right;top:467.72px;font-size:13.8px;line-height:13.8px;color:#333;font-weight:normal;letter-spacing:-0.25px;">321.25</div>
<div class="r" style="left:1868px;top:380px;width:1px;height:10px;background:#6b4848"></div>
<div style="position:absolute;left:0;top:0;width:1784px;height:771px;overflow:hidden">
<div class="r" style="left:128px;top:555px;width:1656px;height:1px;background:#a9a9a9"></div>
<div class="r" style="left:128px;top:555px;width:1px;height:216px;background:#a9a9a9"></div>
<div class="r" style="left:128px;top:530px;width:77px;height:26px;background:#efefef;border:1px solid #a9a9a9;border-bottom:2px solid #a9a9a9;border-radius:2px 2px 0 0"></div>
<div class="r" style="left:204px;top:530px;width:119px;height:26px;background:#fff;border:1px solid #a9a9a9;border-bottom:none;border-radius:2px 2px 0 0"></div>
<div class="t" style="left:140px;top:537.72px;font-size:13.8px;line-height:13.8px;color:#333;font-weight:normal;letter-spacing:-0.25px;">Items [3]</div>
<div class="t" style="left:216px;top:537.72px;font-size:13.8px;line-height:13.8px;color:#333;font-weight:normal;letter-spacing:-0.25px;">Landed Cost [2]</div>
<div class="btn" style="left:139px;top:565px;width:50px;height:26px;"></div>
<div class="t" style="left:-136.0px;width:600px;text-align:center;top:570.72px;font-size:13.8px;line-height:13.8px;color:#333;font-weight:normal;letter-spacing:-0.25px;">Add</div>
<div class="btn" style="left:198px;top:565px;width:58px;height:26px;"></div>
<div class="t" style="left:-73.0px;width:600px;text-align:center;top:570.72px;font-size:13.8px;line-height:13.8px;color:#333;font-weight:normal;letter-spacing:-0.25px;">Copy</div>
<div class="t" style="left:270px;top:571.72px;font-size:13.8px;line-height:13.8px;color:#333;font-weight:normal;letter-spacing:-0.25px;">Allocate landed cost manually:</div>
<div class="r" style="left:457px;top:571px;width:15px;height:15px;border:1px solid #8f8f8f;border-radius:2px;background:#fff"></div>
<div class="r" style="left:1777px;top:565px;width:20px;height:25px;border:1px solid #b1b1b1;border-radius:2px;background:linear-gradient(#fff,#f3f3f3);box-shadow:0 1px 1px rgba(0,0,0,.35)"></div>
<div class="r" style="left:139px;top:601px;width:1762px;height:200px;border:1px solid #a9a9a9;background:#fff"></div>
<div class="r" style="left:141px;top:603px;width:70px;height:28px;background:#f0f0f0"></div>
<div class="r" style="left:214px;top:603px;width:253px;height:28px;background:#f0f0f0"></div>
<div class="r" style="left:470px;top:603px;width:539px;height:28px;background:#f0f0f0"></div>
<div class="r" style="left:1012px;top:603px;width:131px;height:28px;background:#f0f0f0"></div>
<div class="r" style="left:1146px;top:603px;width:388px;height:28px;background:#f0f0f0"></div>
<div class="r" style="left:1537px;top:603px;width:362px;height:28px;background:#f0f0f0"></div>
<div class="r" style="left:212px;top:602px;width:1px;height:31px;background:#d0d0d0"></div>
<div class="r" style="left:468px;top:602px;width:1px;height:31px;background:#d0d0d0"></div>
<div class="r" style="left:1010px;top:602px;width:1px;height:31px;background:#d0d0d0"></div>
<div class="r" style="left:1144px;top:602px;width:1px;height:31px;background:#d0d0d0"></div>
<div class="r" style="left:1535px;top:602px;width:1px;height:31px;background:#d0d0d0"></div>
<div class="r" style="left:140px;top:632px;width:1760px;height:1px;background:#c3c3c3"></div>
<div class="t" style="left:156px;top:609.72px;font-size:13.8px;line-height:13.8px;color:#4d4d4d;font-weight:normal;letter-spacing:-0.25px;">#</div>
<div class="t" style="left:229px;top:609.72px;font-size:13.8px;line-height:13.8px;color:#4d4d4d;font-weight:normal;letter-spacing:-0.25px;">Item</div>
<div class="t" style="left:485px;top:609.72px;font-size:13.8px;line-height:13.8px;color:#4d4d4d;font-weight:normal;letter-spacing:-0.25px;">Description</div>
<div class="t" style="left:1027px;top:609.72px;font-size:13.8px;line-height:13.8px;color:#4d4d4d;font-weight:normal;letter-spacing:-0.25px;">Cost</div>
<div class="t" style="left:1161px;top:609.72px;font-size:13.8px;line-height:13.8px;color:#4d4d4d;font-weight:normal;letter-spacing:-0.25px;">Bill</div>
<div class="t" style="left:1552px;top:609.72px;font-size:13.8px;line-height:13.8px;color:#4d4d4d;font-weight:normal;letter-spacing:-0.25px;">Memo</div>
<div class="r" style="left:140px;top:661px;width:1760px;height:1px;background:#e6e6e6"></div>
<div class="t" style="left:-403px;width:600px;text-align:right;top:640.72px;font-size:13.8px;line-height:13.8px;color:#333;font-weight:normal;letter-spacing:-0.25px;">1</div>
<div class="t" style="left:229px;top:640.72px;font-size:13.8px;line-height:13.8px;color:#333;font-weight:normal;letter-spacing:-0.25px;">1016</div>
<div class="t" style="left:484px;top:640.72px;font-size:13.8px;line-height:13.8px;color:#333;font-weight:normal;letter-spacing:-0.25px;">4810.29.50 China 10%</div>
<div class="t" style="left:529px;width:600px;text-align:right;top:640.72px;font-size:13.8px;line-height:13.8px;color:#333;font-weight:normal;letter-spacing:-0.25px;">87.43</div>
<div class="t" style="left:1160px;top:640.72px;font-size:13.8px;line-height:13.8px;color:#333;font-weight:normal;letter-spacing:-0.25px;text-decoration:underline">Click to Link</div>
<div class="r" style="left:140px;top:663px;width:72px;height:26px;background:#fcefa6"></div>
<div class="r" style="left:213px;top:663px;width:255px;height:26px;background:#fcefa6"></div>
<div class="r" style="left:469px;top:663px;width:541px;height:26px;background:#fcefa6"></div>
<div class="r" style="left:1011px;top:663px;width:133px;height:26px;background:#fadb1e"></div>
<div class="r" style="left:1145px;top:663px;width:390px;height:26px;background:#fcefa6"></div>
<div class="r" style="left:1536px;top:663px;width:364px;height:26px;background:#fcefa6"></div>
<div class="r" style="left:140px;top:690px;width:1760px;height:1px;background:#e6e6e6"></div>
<div class="t" style="left:-403px;width:600px;text-align:right;top:669.72px;font-size:13.8px;line-height:13.8px;color:#333;font-weight:normal;letter-spacing:-0.25px;">2</div>
<div class="t" style="left:229px;top:669.72px;font-size:13.8px;line-height:13.8px;color:#333;font-weight:normal;letter-spacing:-0.25px;">1017</div>
<div class="t" style="left:484px;top:669.72px;font-size:13.8px;line-height:13.8px;color:#333;font-weight:normal;letter-spacing:-0.25px;">Docking Fee</div>
<div class="t" style="left:529px;width:600px;text-align:right;top:669.72px;font-size:13.8px;line-height:13.8px;color:#333;font-weight:normal;letter-spacing:-0.25px;">125.00</div>
<div class="t" style="left:1160px;top:669.72px;font-size:13.8px;line-height:13.8px;color:#333;font-weight:normal;letter-spacing:-0.25px;text-decoration:underline">Click to Link</div>
</div>
<svg style="left:133px;top:810px" width="5" height="8"><path d="M4.6 1V7.6L0.4 4.3Z" fill="#bdbdbd"/></svg>
<div class="r" style="left:147px;top:810px;width:1700px;height:8px;border-radius:4px;background:#d6d6d6"></div>
<div class="r" style="left:147px;top:810px;width:1348px;height:8px;border-radius:4px;background:#999"></div>
<svg style="left:1856px;top:810px" width="6" height="8"><path d="M0.6 0.8V7.4L5.2 4.1Z" fill="#333"/></svg>
<div class="t" style="left:113px;top:841.72px;font-size:13.8px;line-height:13.8px;color:#a3a3a3;font-weight:normal;letter-spacing:-0.25px;">Total:</div>
<div class="t" style="left:-327px;width:600px;text-align:right;top:841.72px;font-size:13.8px;line-height:13.8px;color:#a3a3a3;font-weight:normal;letter-spacing:-0.25px;">874.25</div>
<div class="t" style="left:285px;top:841.72px;font-size:13.8px;line-height:13.8px;color:#a3a3a3;font-weight:normal;letter-spacing:-0.25px;">USD</div>
<div class="t" style="left:320px;top:841.74px;font-size:13.3px;line-height:13.3px;color:#0b6ebf;font-weight:bold;">?</div>
<div class="t" style="left:344px;top:841.72px;font-size:13.8px;line-height:13.8px;color:#a3a3a3;font-weight:normal;letter-spacing:-0.25px;">Landed Cost:</div>
<div class="t" style="left:605px;top:841.72px;font-size:13.8px;line-height:13.8px;color:#a3a3a3;font-weight:normal;letter-spacing:-0.25px;">USD</div>
<div class="t" style="left:665px;top:841.72px;font-size:13.8px;line-height:13.8px;color:#a3a3a3;font-weight:normal;letter-spacing:-0.25px;">Acquisition Cost:</div>
<div class="t" style="left:340px;width:600px;text-align:right;top:841.72px;font-size:13.8px;line-height:13.8px;color:#333;font-weight:normal;letter-spacing:-0.25px;">874.25</div>
<div class="t" style="left:951px;top:841.72px;font-size:13.8px;line-height:13.8px;color:#a3a3a3;font-weight:normal;letter-spacing:-0.25px;">USD</div>
<div class="t" style="left:113px;top:867.74px;font-size:13.3px;line-height:13.3px;color:#333;font-weight:bold;">Total:</div>
<div class="t" style="left:-327px;width:600px;text-align:right;top:867.74px;font-size:13.3px;line-height:13.3px;color:#333;font-weight:bold;">874.25</div>
<div class="t" style="left:285px;top:867.84px;font-size:12px;line-height:12px;color:#333;font-weight:bold;">USD</div>
<div class="t" style="left:344px;top:867.74px;font-size:13.3px;line-height:13.3px;color:#333;font-weight:bold;">Landed Cost:</div>
<div class="t" style="left:605px;top:867.84px;font-size:12px;line-height:12px;color:#333;font-weight:bold;">USD</div>
<div class="t" style="left:665px;top:867.74px;font-size:13.3px;line-height:13.3px;color:#333;font-weight:bold;">Acquisition Cost:</div>
<div class="t" style="left:340px;width:600px;text-align:right;top:867.74px;font-size:13.3px;line-height:13.3px;color:#333;font-weight:bold;">874.25</div>
<div class="t" style="left:951px;top:867.84px;font-size:12px;line-height:12px;color:#333;font-weight:bold;">USD</div>
</body></html>
